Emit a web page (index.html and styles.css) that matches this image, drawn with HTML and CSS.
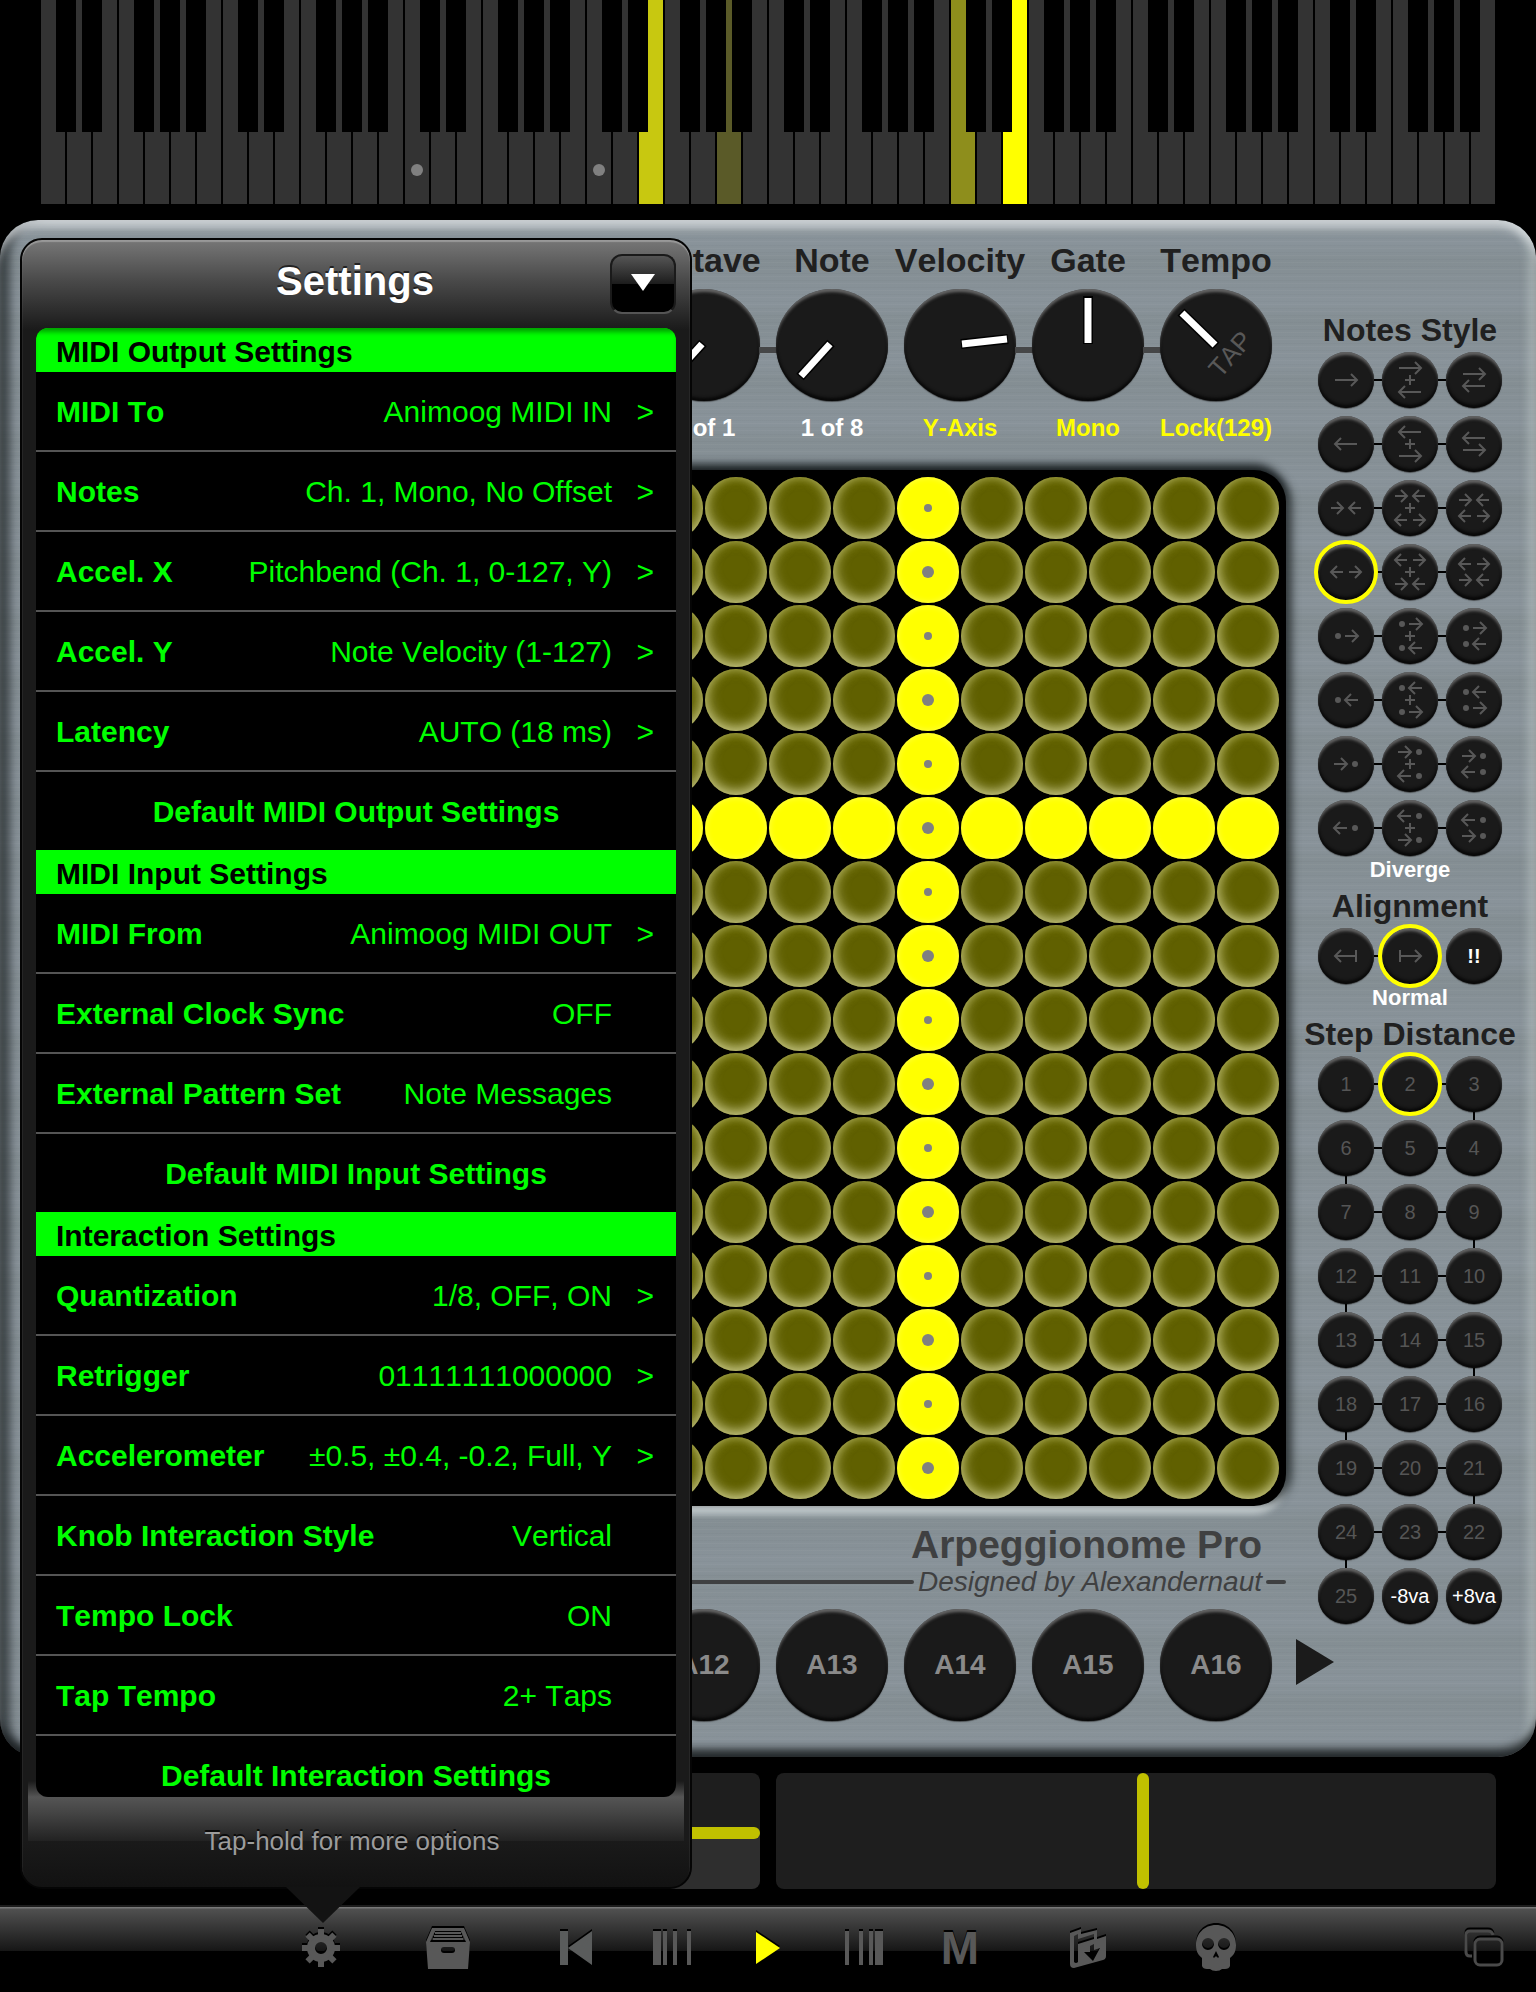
FILE: index.html
```
<!DOCTYPE html>
<html lang="en">
  <head>
    <meta charset="UTF-8" />
    <meta name="viewport" content="width=device-width, initial-scale=1.0" />
    <title>Arpeggionome Pro</title>
    <link rel="stylesheet" href="styles.css">
  </head>

  <body>
    <div class="app">
      <div class="piano" id="piano"></div>

      <main class="panel">
        <section class="deck">
          <div class="knobs">
            <div class="knob linked">
              <h2>Octave</h2>
              <svg class="dial" viewBox="0 0 112 112">
                <path class="edge" d="M55 54L24 88" />
                <path class="mark" d="M54 55L25 87" />
              </svg>
              <p>1 of 1</p>
            </div>
            <div class="knob">
              <h2>Note</h2>
              <svg class="dial" viewBox="0 0 112 112">
                <path class="edge" d="M55 54L24 88" />
                <path class="mark" d="M54 55L25 87" />
              </svg>
              <p>1 of 8</p>
            </div>
            <div class="knob linked">
              <h2>Velocity</h2>
              <svg class="dial" viewBox="0 0 112 112">
                <path class="edge" d="M57 55L104 50" />
                <path class="mark" d="M58 55L103 50" />
              </svg>
              <p class="on">Y-Axis</p>
            </div>
            <div class="knob linked">
              <h2>Gate</h2>
              <svg class="dial" viewBox="0 0 112 112">
                <path class="edge" d="M56 7V55" />
                <path class="mark" d="M56 9V54" />
              </svg>
              <p class="on">Mono</p>
            </div>
            <div class="knob">
              <h2>Tempo</h2>
              <svg class="dial" viewBox="0 0 112 112">
                <text class="tap" transform="translate(77 71) rotate(-49)">TAP</text>
                <path class="edge" d="M56 57L21 23" />
                <path class="mark" d="M55 56L22 24" />
              </svg>
              <p class="on">Lock(129)</p>
            </div>
          </div>

          <div class="board" id="board"></div>

          <div class="brand">
            <h1>Arpeggionome Pro</h1>
            <div class="byline">Designed by Alexandernaut</div>
          </div>

          <div class="bank">
            <button>A12</button>
            <button>A13</button>
            <button>A14</button>
            <button>A15</button>
            <button>A16</button>
            <button class="next" aria-label="Next bank">
              <svg width="38" height="46" viewBox="0 0 38 46"><path d="M0 0L38 23L0 46Z" fill="#1b1b1b" /></svg>
            </button>
          </div>
        </section>

        <aside class="side">
          <h3>Notes Style</h3>
          <div class="grid" id="styles"></div>
          <p>Diverge</p>
          <h3>Alignment</h3>
          <div class="grid" id="alignment"></div>
          <p>Normal</p>
          <h3>Step Distance</h3>
          <div class="grid" id="steps"></div>
        </aside>
      </main>

      <div class="pads">
        <input class="slide-y" type="range" min="0" max="100" value="48" aria-label="Y position" />
        <input class="slide-x" type="range" min="0" max="100" value="51" aria-label="X position" />
      </div>

      <nav class="toolbar">
        <button class="wide" aria-label="Settings">
          <svg width="40" height="42" viewBox="-21 -21 40 42">
            <g fill="#585858">
              <path fill-rule="evenodd" d="M0 -14A14 14 0 1 1 0 14A14 14 0 1 1 0 -14ZM0 -6A6 6 0 1 0 0 6A6 6 0 1 0 0 -6Z" />
              <path id="tooth" d="M-3 -19H3V-12H-3Z" />
              <use href="#tooth" transform="rotate(45)" />
              <use href="#tooth" transform="rotate(90)" />
              <use href="#tooth" transform="rotate(135)" />
              <use href="#tooth" transform="rotate(180)" />
              <use href="#tooth" transform="rotate(225)" />
              <use href="#tooth" transform="rotate(270)" />
              <use href="#tooth" transform="rotate(315)" />
            </g>
          </svg>
        </button>
        <button class="wide" aria-label="Library">
          <svg width="44" height="42" viewBox="0 0 44 42">
            <path fill="#585858" fill-rule="evenodd" d="M6 1H38L44 15L42 42H2L0 15ZM9 4L4 15H40L35 4ZM18 20A3 3 0 0 0 18 26H26A3 3 0 0 0 26 20Z" />
            <path d="M9 6H35M8 9H36M7 12H37" stroke="#585858" stroke-width="2" />
          </svg>
        </button>
        <span class="space"></span>
        <button aria-label="Back to start">
          <svg width="32" height="34" viewBox="0 0 32 34"><path fill="#5a5c5c" d="M0 0H8V34H0ZM32 0V34L8 17Z" /></svg>
        </button>
        <button aria-label="Slower">
          <svg width="38" height="34" viewBox="0 0 38 34"><path fill="#585858" d="M0 0H8V34H0ZM10 0H14V34H10ZM20 0H24V34H20ZM34 0H38V34H34Z" /></svg>
        </button>
        <button aria-label="Play">
          <svg width="24" height="34" viewBox="0 0 24 34"><path fill="#ff0" d="M0 1L24 17L0 33Z" /></svg>
        </button>
        <button aria-label="Faster">
          <svg width="38" height="34" viewBox="0 0 38 34"><path fill="#585858" d="M0 0H4V34H0ZM14 0H18V34H14ZM24 0H28V34H24ZM30 0H38V34H30Z" /></svg>
        </button>
        <button class="letter">M</button>
        <span class="space"></span>
        <button class="wide" aria-label="Load">
          <svg width="36" height="40" viewBox="0 0 36 40">
            <path fill="#585858" fill-rule="evenodd" d="M0 5L11 1V6L27 2V11L36 8V28Q36 31 33 32L4 40Q0 40 0 36ZM4 8V34Q6 36 8 34V16L24 11V6L8 11V6ZM20 18V24H14L23 33L30 20L24 22V16Z" />
          </svg>
        </button>
        <button class="wide" aria-label="Panic">
          <svg width="40" height="46" viewBox="0 0 40 46">
            <path fill="#585858" fill-rule="evenodd" d="M20 0C32 0 40 9 40 20C40 26 38 30 34 33V41Q33 44 29 44H26Q24 46 20 46Q16 46 14 44H11Q7 44 6 41V33C2 30 0 26 0 20C0 9 8 0 20 0ZM12 13A6 6 0 1 0 12 25A6 6 0 1 0 12 13ZM28 13A6 6 0 1 0 28 25A6 6 0 1 0 28 13ZM20 26L17 32Q18 34 20 31Q22 34 23 32Z" />
          </svg>
        </button>
        <button class="last" aria-label="Windows">
          <svg width="40" height="38" viewBox="0 0 40 38" fill="none" stroke="#4a4a4a" stroke-width="3">
            <path d="M8 27H6Q2 27 2 23V6Q2 2 6 2H24Q28 2 29 6" />
            <rect x="11" y="10" width="27" height="26" rx="5" />
          </svg>
        </button>
      </nav>

      <div class="popover">
        <div class="popover-head">
          <h2>Settings</h2>
          <button class="fold" aria-label="Close settings">
            <svg width="24" height="17" viewBox="0 0 24 17"><path d="M0 0H24L12 17Z" fill="#fff" /></svg>
          </button>
        </div>
        <div class="list">
          <h3>MIDI Output Settings</h3>
          <button class="row more"><b>MIDI To</b><span>Animoog MIDI IN</span></button>
          <button class="row more"><b>Notes</b><span>Ch. 1, Mono, No Offset</span></button>
          <button class="row more"><b>Accel. X</b><span>Pitchbend (Ch. 1, 0-127, Y)</span></button>
          <button class="row more"><b>Accel. Y</b><span>Note Velocity (1-127)</span></button>
          <button class="row more"><b>Latency</b><span>AUTO (18 ms)</span></button>
          <button class="row reset"><b>Default MIDI Output Settings</b></button>
          <h3>MIDI Input Settings</h3>
          <button class="row more"><b>MIDI From</b><span>Animoog MIDI OUT</span></button>
          <button class="row"><b>External Clock Sync</b><span>OFF</span></button>
          <button class="row"><b>External Pattern Set</b><span>Note Messages</span></button>
          <button class="row reset"><b>Default MIDI Input Settings</b></button>
          <h3>Interaction Settings</h3>
          <button class="row more"><b>Quantization</b><span>1/8, OFF, ON</span></button>
          <button class="row more"><b>Retrigger</b><span>01111111000000</span></button>
          <button class="row more"><b>Accelerometer</b><span>±0.5, ±0.4, -0.2, Full, Y</span></button>
          <button class="row"><b>Knob Interaction Style</b><span>Vertical</span></button>
          <button class="row"><b>Tempo Lock</b><span>ON</span></button>
          <button class="row"><b>Tap Tempo</b><span>2+ Taps</span></button>
          <button class="row reset"><b>Default Interaction Settings</b></button>
        </div>
        <p class="hint">Tap-hold for more options</p>
      </div>
    </div>

    <script>
      // 8 octaves of white keys, black keys hang off the key to their left
      let piano = document.getElementById("piano");
      let lit = { 23: "lit-3", 26: "lit-1", 35: "lit-2", 37: "lit-4" };
      for (let i = 0; i < 56; i++) {
        let key = document.createElement("span");
        key.className = "key";
        if ([0, 1, 3, 4, 5].includes(i % 7)) key.classList.add("sharp");
        if (lit[i]) key.classList.add(lit[i]);
        if (i == 14 || i == 21) key.classList.add("dot");
        piano.appendChild(key);
      }

      // 16 x 16 board, one row and one column lit
      let board = document.getElementById("board");
      for (let row = 0; row < 16; row++) {
        for (let col = 0; col < 16; col++) {
          let pad = document.createElement("button");
          pad.className = "pad";
          pad.setAttribute("aria-label", "Row " + (row + 1) + ", column " + (col + 1));
          if (row == 5 || col == 10) pad.classList.add("lit");
          if (col == 10) pad.classList.add(row % 2 ? "big" : "small");
          board.appendChild(pad);
        }
      }

      let right = (x1, x2, y) =>
        `M${x1} ${y}H${x2}M${x2 - 6} ${y - 6}L${x2} ${y}L${x2 - 6} ${y + 6}`;
      let left = (x1, x2, y) =>
        `M${x2} ${y}H${x1}M${x1 + 6} ${y - 6}L${x1} ${y}L${x1 + 6} ${y + 6}`;
      let dot = (x, y) =>
        `M${x - 1} ${y - 1}h2v2h-2zM${x - 2} ${y}a2 2 0 1 0 4 0a2 2 0 1 0 -4 0`;

      let glyphs = [
        (y) => right(-11, 11, y),
        (y) => left(-11, 11, y),
        (y) => right(-15, -3, y) + left(3, 15, y),
        (y) => left(-15, -3, y) + right(3, 15, y),
        (y) => dot(-8, y) + right(-1, 12, y),
        (y) => dot(-8, y) + left(-1, 12, y),
        (y) => right(-12, 1, y) + dot(9, y),
        (y) => left(-12, 1, y) + dot(9, y),
      ];

      let addButton = (id, content, classes, label) => {
        let button = document.createElement("button");
        button.className = "round " + classes;
        button.innerHTML = content;
        if (label) button.setAttribute("aria-label", label);
        let cell = document.createElement("div");
        cell.className = "cell " + classes;
        cell.appendChild(button);
        document.getElementById(id).appendChild(cell);
      };

      let icon = (d) =>
        `<svg width="40" height="48" viewBox="-20 -24 40 48"><path class="arrow" d="${d}" /></svg>`;

      for (let i = 0; i < 8; i++) {
        let first = glyphs[i];
        let second = glyphs[i % 2 ? i - 1 : i + 1];
        let gap = i < 2 ? 6 : 8;
        let name = "Style " + (i + 1);
        addButton("styles", icon(first(0)), i == 3 ? "across picked" : "across", name);
        addButton("styles", icon(first(-12) + "M-5 0H5M0 -5V5" + second(12)), "across", name + " together");
        addButton("styles", icon(first(-gap) + second(gap)), "", name + " in turn");
      }

      addButton("alignment", icon(left(-11, 11, 0) + "M10 -6V6"), "across", "Reverse");
      addButton("alignment", icon(right(-11, 11, 0) + "M-10 -6V6"), "picked", "Normal");
      addButton("alignment", "!!", "bright strong");

      // numbers snake down the grid
      for (let row = 0; row < 8; row++) {
        for (let col = 0; col < 3; col++) {
          let step = row * 3 + (row % 2 ? 3 - col : col + 1);
          let classes = col < 2 ? "across" : "";
          if (col == (row % 2 ? 0 : 2)) classes += " down";
          if (step == 2) classes += " picked";
          addButton("steps", step, classes);
        }
      }
      addButton("steps", "25", "");
      addButton("steps", "-8va", "bright");
      addButton("steps", "+8va", "bright");
    </script>
  </body>
</html>
```
FILE: styles.css
```
* {
  box-sizing: border-box;
}
body {
  margin: 0;
  background: #000;
  font-family: "Liberation Sans", Arial, Helvetica, sans-serif;
  font-kerning: none;
}
h1, h2, h3, p {
  margin: 0;
}
button {
  padding: 0;
  border: 0;
  background: none;
  color: inherit;
  font-family: inherit;
  font-kerning: inherit;
}
.app {
  position: relative;
  display: flex;
  flex-direction: column;
  gap: 16px;
  min-height: 100vh;
  overflow: hidden;
}

/* piano */
.piano {
  display: flex;
  gap: 2px;
  height: 204px;
  padding: 0 41px;
}
.key {
  position: relative;
  flex: 1;
  background: #333;
}
.sharp::after {
  content: "";
  position: absolute;
  z-index: 1;
  top: 0;
  right: -11px;
  width: 20px;
  height: 132px;
  background: #000;
}
.dot::before {
  content: "";
  position: absolute;
  top: 164px;
  left: 6px;
  width: 12px;
  height: 12px;
  border-radius: 50%;
  background: #808080;
}
.lit-1 { background: #5a5a28; }
.lit-2 { background: #8e8e1c; }
.lit-3 { background: #c8c810; }
.lit-4 { background: #ff0; }

/* metal panel */
.panel {
  display: flex;
  justify-content: flex-end;
  gap: 14px;
  padding: 20px 16px 36px 0;
  border-radius: 38px;
  background:
    repeating-linear-gradient(rgba(255, 255, 255, 0.03) 0 1px, transparent 1px 4px, rgba(0, 0, 0, 0.02) 4px 5px, transparent 5px 7px),
    repeating-linear-gradient(#869096 0, #89939a 23px, #848e93 41px, #869096 60px);
  box-shadow:
    inset 0 12px 8px -4px rgba(225, 230, 232, 0.75),
    inset 0 -12px 8px -4px rgba(25, 30, 32, 0.9),
    inset -12px 0 8px -4px rgba(200, 210, 208, 0.45),
    inset 14px 0 10px -4px rgba(30, 36, 38, 0.7);
}
.deck {
  width: 1036px;
}
.knobs {
  display: flex;
  justify-content: flex-end;
  padding-right: 6px;
  margin-bottom: 28px;
}
.knob {
  position: relative;
  display: flex;
  flex-direction: column;
  align-items: center;
  gap: 9px;
  width: 128px;
}
.knob h2 {
  color: #202020;
  font-size: 34px;
  line-height: 40px;
}
.knob p {
  margin-top: 4px;
  color: #fff;
  font-size: 24px;
  font-weight: bold;
  line-height: 28px;
}
.knob p.on {
  color: #ff0;
}
.linked::after {
  content: "";
  position: absolute;
  top: 107px;
  left: 119px;
  width: 18px;
  height: 6px;
  background: #454647;
}
.dial,
.bank button,
.round {
  border-radius: 50%;
  background: #1a1a1a;
  box-shadow:
    inset 0 4px 3px -1px rgba(150, 150, 150, 0.6),
    inset 0 -3px 3px #080808,
    0 1px 1px rgba(30, 30, 30, 0.6);
}
.dial {
  width: 112px;
  height: 112px;
}
.edge {
  stroke: #000;
  stroke-width: 10;
}
.mark {
  stroke: #fff;
  stroke-width: 7;
}
.tap {
  fill: #585858;
  font-size: 26px;
  text-anchor: middle;
}

/* button board */
.board {
  display: grid;
  grid-template-columns: repeat(16, 1fr);
  gap: 2px;
  padding: 7px;
  border-radius: 32px;
  background: #000;
  box-shadow:
    0 -8px 8px -2px rgba(20, 26, 28, 0.9),
    8px 0 8px -2px rgba(30, 36, 38, 0.75),
    0 8px 6px rgba(215, 222, 224, 0.8);
}
.pad {
  display: flex;
  align-items: center;
  justify-content: center;
  aspect-ratio: 1;
  border-radius: 50%;
  background: #606000;
  box-shadow:
    inset 5px -4px 12px -1px rgba(225, 225, 170, 0.5),
    inset -5px -4px 12px -1px rgba(225, 225, 170, 0.5),
    inset 0 3px 10px rgba(160, 160, 50, 0.5);
}
.pad.lit {
  background: #ff0;
  box-shadow: inset 0 0 6px #ffff50;
}
.small::before,
.big::before {
  content: "";
  width: 8px;
  height: 8px;
  border-radius: 50%;
  background: #808080;
}
.big::before {
  width: 12px;
  height: 12px;
}

.brand {
  margin-top: 18px;
  color: #3f4041;
  text-align: right;
}
.brand h1 {
  padding-right: 24px;
  font-size: 39px;
  line-height: 42px;
}
.byline {
  display: flex;
  align-items: center;
  gap: 4px;
  font-size: 28px;
  font-style: italic;
  line-height: 32px;
}
.byline::before,
.byline::after {
  content: "";
  width: 20px;
  height: 4px;
  border-radius: 2px;
  background: #3f4041;
}
.byline::before {
  flex: 1;
}
.bank {
  display: flex;
  align-items: center;
  justify-content: flex-end;
  gap: 16px;
  margin: 11px -48px 0 0;
}
.bank button {
  width: 112px;
  height: 112px;
  color: #8a8a8a;
  font-size: 28px;
  font-weight: bold;
}
.bank .next {
  width: 46px;
  padding-left: 8px;
  border-radius: 0;
  background: none;
  box-shadow: none;
}

/* right hand buttons */
.side {
  display: flex;
  flex-direction: column;
  align-items: center;
  width: 220px;
  padding-top: 64px;
}
.side h3 {
  padding-top: 8px;
  color: #202020;
  font-size: 32px;
  line-height: 36px;
}
.side p {
  color: #fff;
  font-size: 22px;
  font-weight: bold;
  line-height: 20px;
}
.grid {
  display: grid;
  grid-template-columns: repeat(3, 64px);
}
.cell {
  position: relative;
  padding: 4px;
}
.across::after,
.down::before {
  content: "";
  position: absolute;
  background: #000;
}
.cell.across::after {
  top: 31px;
  right: -4px;
  width: 8px;
  height: 2px;
}
.cell.down::before {
  bottom: -4px;
  left: 31px;
  width: 2px;
  height: 8px;
}
.round {
  display: flex;
  align-items: center;
  justify-content: center;
  width: 56px;
  height: 56px;
  color: #555;
  font-size: 20px;
}
.round.picked {
  position: relative;
  z-index: 1;
  outline: 4px solid #ff0;
}
.round.bright {
  color: #fff;
}
.round.strong {
  font-weight: bold;
}
.arrow {
  fill: none;
  stroke: #585858;
  stroke-width: 2;
}

/* touch strips */
.pads {
  display: flex;
  gap: 16px;
  height: 116px;
  padding: 0 40px;
}
.pads input {
  appearance: none;
  flex: 1;
  min-width: 0;
  height: 116px;
  margin: 0;
  border-radius: 8px;
  background: #1e1e1e;
  overflow: hidden;
}
.pads input::-webkit-slider-thumb {
  appearance: none;
  border-radius: 6px;
  background: #c0c000;
}
.slide-x::-webkit-slider-thumb {
  width: 12px;
  height: 116px;
}
.pads .slide-y {
  writing-mode: vertical-lr;
  direction: rtl;
  background: linear-gradient(#1e1e1e 52%, #2e2e2e 52%);
}
.slide-y::-webkit-slider-thumb {
  width: 720px;
  height: 12px;
}

/* toolbar */
.toolbar {
  display: flex;
  align-items: center;
  height: 88px;
  padding: 0 12px 4px 256px;
  border-top: 2px solid #1c1c1c;
  background: linear-gradient(#777 0 1px, #505050 2px, #161616 44px, #000 44px);
}
.toolbar button {
  display: flex;
  align-items: center;
  justify-content: center;
  width: 96px;
  height: 80px;
}
.toolbar .wide {
  width: 128px;
}
.toolbar .last {
  width: 80px;
  margin-left: auto;
}
.toolbar svg {
  filter: drop-shadow(0 -2px 0 #000);
}
.space {
  width: 16px;
}
.toolbar .letter {
  color: #585858;
  font-size: 46px;
  font-weight: bold;
  text-shadow: 0 -2px 0 #000;
}

/* settings popover */
.popover {
  position: absolute;
  z-index: 2;
  top: 238px;
  bottom: 104px;
  left: 20px;
  display: flex;
  flex-direction: column;
  width: 672px;
  padding: 0 14px;
  border: 2px solid #050505;
  border-radius: 22px;
  background:
    linear-gradient(#1a1a1a, #555 16px, #444 32px, #222 60px) no-repeat center bottom 46px / calc(100% - 12px) 60px,
    linear-gradient(#777, #4a4a4a 40px, #1a1a1a 90px, #1a1a1a calc(100% - 46px), #121212);
  box-shadow: inset 0 2px 1px #999;
}
.popover::after {
  content: "";
  position: absolute;
  top: 100%;
  left: 264px;
  width: 74px;
  height: 36px;
  background: #131313;
  clip-path: polygon(0 0, 100% 0, 50% 100%);
}
.popover-head {
  display: flex;
  align-items: center;
  height: 88px;
}
.popover-head h2 {
  flex: 1;
  padding: 0 0 6px 64px;
  color: #fff;
  font-size: 40px;
  line-height: 76px;
  text-align: center;
  text-shadow: 0 -2px 0 #222;
}
.fold {
  width: 66px;
  height: 60px;
  border: 2px solid #1a1a1a;
  border-bottom-color: #555;
  border-radius: 12px;
  background: linear-gradient(#555, #1c1c1c 50%, #000 50%);
}
.list {
  flex: 1;
  min-height: 0;
  overflow: hidden;
  border-radius: 12px;
  background: #000;
  color: #0f0;
}
.list h3 {
  padding: 4px 20px 0;
  background: #0f0;
  color: #000;
  font-size: 30px;
  line-height: 40px;
}
.list h3:first-child {
  box-shadow: inset 0 6px 5px -2px #00a000;
}
.row {
  display: flex;
  align-items: center;
  justify-content: space-between;
  width: 100%;
  height: 80px;
  padding: 2px 64px 0 20px;
  border-bottom: 2px solid #555;
  font-size: 30px;
}
.row.more {
  padding-right: 22px;
}
.row.more span {
  flex: 1;
  text-align: right;
}
.row.more::after {
  content: ">";
  width: 42px;
  text-align: right;
}
.row.reset {
  justify-content: center;
  height: 78px;
  padding: 2px 20px 0;
  border: 0;
}
.hint {
  height: 90px;
  padding-right: 8px;
  color: #9c9c9c;
  font-size: 26px;
  font-kerning: normal;
  line-height: 88px;
  text-align: center;
  text-shadow: 0 -2px 0 #0a0a0a;
}
```
